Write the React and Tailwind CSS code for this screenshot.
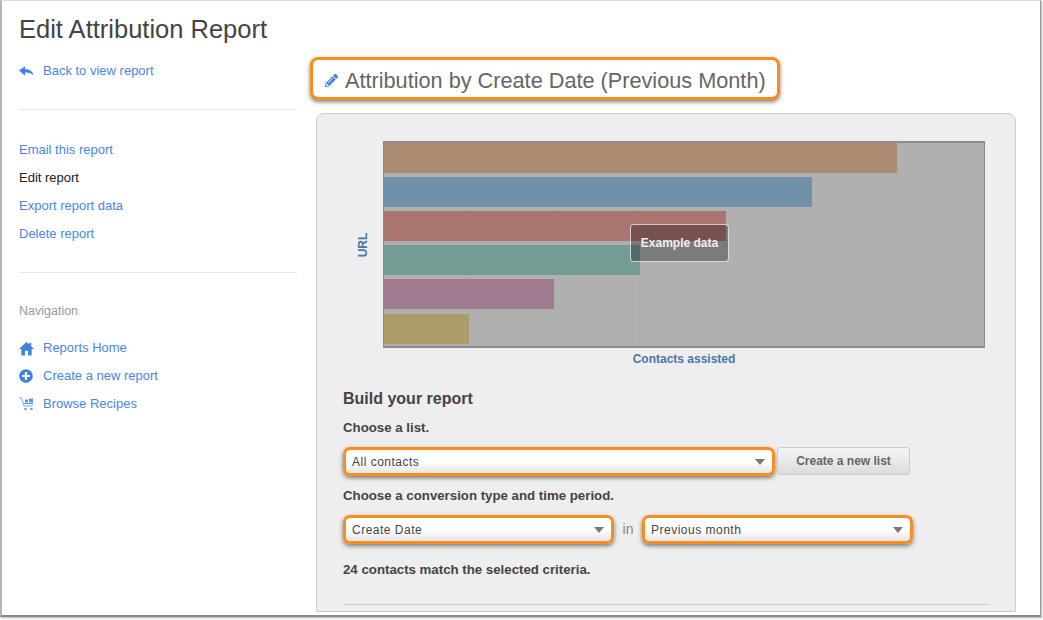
import { FaPencilAlt, FaPlusCircle } from 'react-icons/fa';

const bars = [
  { width: 'w-[513px]', color: 'bg-[#ab8c72]' },
  { width: 'w-[428px]', color: 'bg-[#7191a8]' },
  { width: 'w-[342px]', color: 'bg-[#aa7570]' },
  { width: 'w-[256px]', color: 'bg-[#749b94]' },
  { width: 'w-[170px]', color: 'bg-[#a07b8f]' },
  { width: 'w-[85px] mt-[1px]', color: 'bg-[#ab9c69]' },
];

const gridLines = ['left-[85px]', 'left-[170px]', 'left-[255px]', 'left-[341px]', 'left-[428px]', 'left-[513px]'];

function ReplyIcon() {
  return (
    <svg viewBox="0 0 16 10" className="w-[15px] h-[10px]" fill="currentColor">
      <path d="M0 4.500 6.500 0v3C11 3 14.500 5 15.500 9.500 13 7 10 6.300 6.500 6.500V10Z" />
    </svg>
  );
}

function HomeIcon() {
  return (
    <svg viewBox="0 0 16 16" className="w-[15px] h-[15px]" fill="currentColor">
      <path d="M8 1 11 3.800V2h2v3.700L16 8.500H13.500V15.500H9.700V10.500H6.300V15.500H2.500V8.500H0Z" />
    </svg>
  );
}

function CartIcon() {
  return (
    <svg viewBox="0 0 16 14" className="w-4 h-[14px] text-[#5b93e6]" fill="none" stroke="currentColor">
      <path d="M0 1h2.500l2.500 8h9" strokeWidth="0.8" />
      <path d="M4.500 6.500h9.500" strokeWidth="1" />
      <rect x="6" y="2.500" width="3" height="3" fill="currentColor" stroke="none" />
      <rect x="10" y="1.500" width="4" height="4" fill="currentColor" stroke="none" />
      <circle cx="6.500" cy="12" r="1.200" fill="currentColor" stroke="none" />
      <circle cx="12.500" cy="12" r="1.200" fill="currentColor" stroke="none" />
    </svg>
  );
}

function SideLink({ icon, children }) {
  return (
    <a className="flex items-center h-7 text-[13px] text-[#4a86e8]">
      {icon && <span className="w-6 flex items-center text-[#3f83e0]">{icon}</span>}
      {children}
    </a>
  );
}

function Select({ label, width }) {
  return (
    <div className={`${width} h-[29px] flex items-center justify-between pl-[6px] pr-[7px] rounded-[7px] border-[3px] border-[#fb8c1e] bg-gradient-to-b from-white via-white to-[#e6e6e6] shadow-[0_2px_4px_rgba(0,0,0,0.5)]`}>
      <span className="text-[12px] tracking-[0.5px] text-[#444]">{label}</span>
      <span className="w-0 h-0 border-x-[5px] border-x-transparent border-t-[6px] border-t-[#777]" />
    </div>
  );
}

export default function App() {
  return (
    <div className="w-[1043px] h-[620px] bg-white font-['Liberation_Sans',Arial,sans-serif] overflow-hidden">
      <div className="w-[1041px] h-[617px] border-l-2 border-l-[#b5b5b5] border-t border-t-[#ddd] border-r border-r-[#999] border-b-2 border-b-[#888] shadow-[1px_1px_2px_rgba(0,0,0,0.3)] overflow-hidden">
        <h1 className="pl-[17px] pt-[13px] h-[46px] text-[25.5px] leading-[30px] text-[#444]">Edit Attribution Report</h1>

        <div className="flex pl-[17px]">
          {/* Sidebar */}
          <div className="w-[278px] shrink-0">
            <div className="pt-[10px] h-[63px] border-b border-[#e8e8e8]">
              <SideLink icon={<ReplyIcon />}>Back to view report</SideLink>
            </div>
            <div className="pt-[26px] pb-[24px] border-b border-[#e8e8e8]">
              <SideLink>Email this report</SideLink>
              <a className="flex items-center h-7 text-[13px] text-[#222]">Edit report</a>
              <SideLink>Export report data</SideLink>
              <SideLink>Delete report</SideLink>
            </div>
            <p className="mt-[30px] mb-[15px] text-[12.5px] leading-[16px] text-[#999]">Navigation</p>
            <SideLink icon={<HomeIcon />}>Reports Home</SideLink>
            <SideLink icon={<FaPlusCircle size={14} />}>Create a new report</SideLink>
            <SideLink icon={<CartIcon />}>Browse Recipes</SideLink>
          </div>

          {/* Main */}
          <div className="ml-[13px] w-[706px]">
            <div className="mt-[10px] w-[470px] h-[43px] flex items-center gap-[7px] pl-[12px] rounded-[8px] border-[3px] border-[#fb8c1e] bg-white shadow-[0_2px_4px_rgba(0,0,0,0.5)]">
              <FaPencilAlt size={13} className="text-[#3f83e0] mt-[4px]" />
              <span className="mt-[4px] text-[21.7px] leading-none text-[#666]">Attribution by Create Date (Previous Month)</span>
            </div>

            <div className="mt-[13px] ml-[6px] w-[700px] h-[499px] bg-[#eee] border border-[#ccc] rounded-t-[8px] pt-[27px] pl-[26px] overflow-hidden">
              <div className="flex items-center">
                <div className="w-10 flex justify-center">
                  <span className="-rotate-90 text-[12px] font-bold text-[#4a76a8]">URL</span>
                </div>
                <div className="relative w-[602px] h-[207px] bg-[#b0b0b0] border-y-2 border-x border-[#8c8c8c]">
                  {gridLines.map((left) => (
                    <div key={left} className={`absolute top-0 bottom-0 w-px bg-[#adadad] ${left}`} />
                  ))}
                  <div className="relative flex flex-col gap-[4px]">
                    {bars.map((bar) => (
                      <div key={bar.color} className={`h-[30px] ${bar.width} ${bar.color}`} />
                    ))}
                  </div>
                  <div className="absolute left-[246px] top-[81px] w-[99px] h-[38px] flex items-center justify-center rounded-[4px] border border-white/70 bg-black/30 text-[12px] font-bold text-[#eee]">
                    Example data
                  </div>
                </div>
              </div>
              <p className="mt-[3px] ml-[40px] w-[602px] text-center text-[12px] leading-[16px] font-bold text-[#4a76a8]">Contacts assisted</p>

              <h2 className="mt-[22px] text-[16px] leading-[20px] font-bold text-[#444]">Build your report</h2>
              <p className="mt-[11px] text-[13.25px] leading-[16px] font-bold text-[#444]">Choose a list.</p>
              <div className="mt-[11px] flex items-start gap-[2px]">
                <Select label="All contacts" width="w-[432px]" />
                <button className="w-[133px] h-[28px] rounded-[3px] border border-[#ccc] bg-gradient-to-b from-[#f5f5f5] to-[#dcdcdc] text-[12px] font-bold text-[#666]">
                  Create a new list
                </button>
              </div>
              <p className="mt-[12px] text-[13.25px] leading-[16px] font-bold text-[#444]">Choose a conversion type and time period.</p>
              <div className="mt-[11px] flex items-center">
                <Select label="Create Date" width="w-[271px]" />
                <span className="w-[28px] text-center text-[14px] text-[#888]">in</span>
                <Select label="Previous month" width="w-[271px]" />
              </div>
              <p className="mt-[18px] text-[13.25px] leading-[16px] font-bold text-[#444]">24 contacts match the selected criteria.</p>
              <div className="mt-[26px] w-[646px] border-t border-[#ccc]" />
            </div>
          </div>
        </div>
      </div>
    </div>
  );
}
